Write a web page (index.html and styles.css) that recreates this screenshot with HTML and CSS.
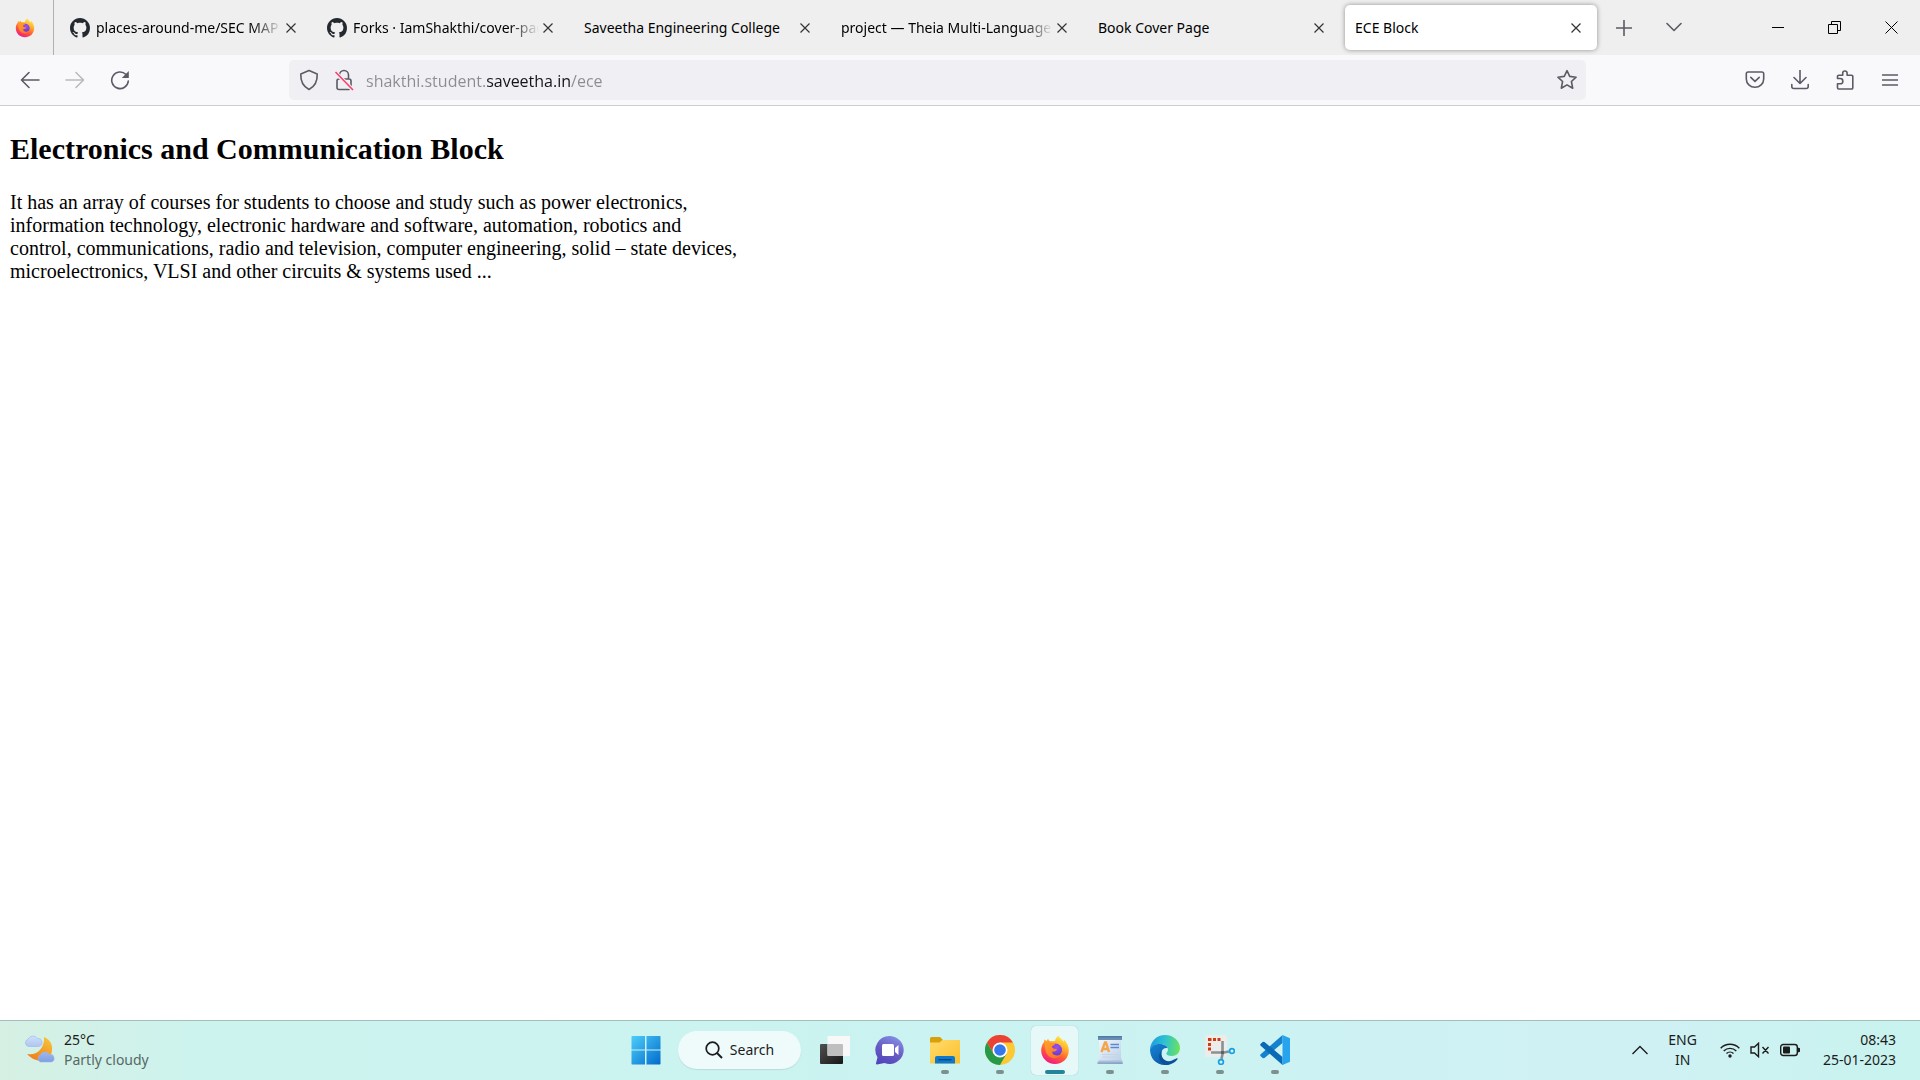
FILE: index.html
```html
<!DOCTYPE html>
<html lang="en">
<head>
<meta charset="utf-8">
<title>ECE Block</title>
<link rel="stylesheet" href="styles.css">
</head>
<body>
<svg class="defs" aria-hidden="true">
  <defs>
    <linearGradient id="fxBody" x1="0.8" y1="0" x2="0.3" y2="1"><stop offset="0" stop-color="#fff44f"/><stop offset="0.35" stop-color="#ffb02a"/><stop offset="0.65" stop-color="#ff5a36"/><stop offset="1" stop-color="#f0158a"/></linearGradient>
    <radialGradient id="fxGlobe" cx="0.6" cy="0.3" r="0.8"><stop offset="0" stop-color="#a04df0"/><stop offset="1" stop-color="#4a3bc8"/></radialGradient>
    <linearGradient id="fxFox" x1="0" y1="0" x2="1" y2="1"><stop offset="0" stop-color="#ffa62b"/><stop offset="1" stop-color="#ff6a2c"/></linearGradient>
    <linearGradient id="winBlue" gradientUnits="userSpaceOnUse" x1="0" y1="0" x2="30" y2="30"><stop offset="0" stop-color="#4fd0fb"/><stop offset="1" stop-color="#0069cb"/></linearGradient>
    <linearGradient id="chatG" x1="0.8" y1="0" x2="0.3" y2="1"><stop offset="0" stop-color="#8794e8"/><stop offset="0.5" stop-color="#6a5fc4"/><stop offset="1" stop-color="#5246bd"/></linearGradient>
    <linearGradient id="folderG" x1="0" y1="0" x2="1" y2="1"><stop offset="0" stop-color="#ffdc6b"/><stop offset="1" stop-color="#fcbf2d"/></linearGradient>
    <linearGradient id="edgeTop" x1="0" y1="0.4" x2="1" y2="0.5"><stop offset="0" stop-color="#1b9de0"/><stop offset="0.5" stop-color="#2fc3d0"/><stop offset="1" stop-color="#6be35a"/></linearGradient>
    <linearGradient id="edgeLow" x1="0" y1="0" x2="0.6" y2="1"><stop offset="0" stop-color="#1586d8"/><stop offset="1" stop-color="#0c59a4"/></linearGradient>
    <linearGradient id="moonG" x1="0.8" y1="0" x2="0.2" y2="1"><stop offset="0" stop-color="#f8c33a"/><stop offset="1" stop-color="#ee7c1a"/></linearGradient>
    <linearGradient id="cloudG" x1="0" y1="0" x2="0" y2="1"><stop offset="0" stop-color="#cfe0fb"/><stop offset="1" stop-color="#7f9ee2"/></linearGradient>
    <linearGradient id="darkG" x1="0" y1="0" x2="1" y2="1"><stop offset="0" stop-color="#505050"/><stop offset="1" stop-color="#171717"/></linearGradient>
    <linearGradient id="wpG" x1="0" y1="0" x2="1" y2="1"><stop offset="0" stop-color="#f4f9fd"/><stop offset="1" stop-color="#b4cce6"/></linearGradient>
    <symbol id="firefox" viewBox="0 0 30 30">
      <path fill="url(#fxBody)" d="M18.5 0.8c1.2 2 3.5 3.6 5 6 .4-.8.5-1.700.3-2.600 3.200 3 5 7 5 11.300C28.800 23.200 22.600 29 15 29S1.200 23 1.200 15.500c0-3.200 1-6.200 2.800-8.500l.5-2.500 2 1.500 1.500-2.300 1.500 2.500 5.500-.2c.3-2 1.500-4 3.500-5.200z"/>
      <circle cx="15.500" cy="15" r="6.500" fill="url(#fxGlobe)"/>
      <path fill="url(#fxFox)" d="M4.500 6l2.500 1.200L9 5.500c.5 1.500 1.500 2.300 3 2.500l3.500.3c-.3 1.500-2 2.300-3.500 3 .2 1.500.7 2 2 2.500l3 .2c-.6 2.300-2.500 3-4.500 2.500-1 2.500 3.500 5.500 8 3-1.500 4.500-9.500 5-12.800.5C4.500 16 5 10 4.500 6z"/>
    </symbol>
    <symbol id="github" viewBox="0 0 16 16"><path fill="#24292f" d="M8 0C3.58 0 0 3.58 0 8c0 3.540 2.290 6.530 5.470 7.590.4.070.55-.17.55-.38 0-.19-.01-.82-.01-1.490-2.010.37-2.530-.49-2.690-.94-.09-.23-.48-.94-.82-1.130-.28-.15-.68-.52-.01-.53.63-.01 1.080.58 1.230.82.72 1.210 1.870.87 2.330.66.070-.52.28-.87.51-1.070-1.780-.2-3.640-.89-3.640-3.950 0-.87.31-1.590.82-2.150-.08-.2-.36-1.020.08-2.120 0 0 .67-.21 2.200.82.64-.18 1.320-.27 2-.27s1.360.09 2 .27c1.530-1.040 2.200-.82 2.200-.82.44 1.100.16 1.920.08 2.120.51.56.82 1.270.82 2.150 0 3.070-1.870 3.750-3.650 3.950.29.25.54.73.54 1.480 0 1.070-.01 1.930-.01 2.200 0 .21.15.46.55.38A8.010 8.010 0 0 0 16 8c0-4.420-3.580-8-8-8z"/></symbol>
    <symbol id="x" viewBox="0 0 10 10"><path d="M.5.5l9 9M9.500.5l-9 9" fill="none" stroke="currentColor" stroke-width="1.200"/></symbol>
  </defs>
</svg>

<header class="browser">
  <div class="tabstrip">
    <button class="pinned" aria-label="Firefox View"><svg width="20" height="20"><use href="#firefox"/></svg></button>
    <div class="tabs" role="tablist">
      <div class="tab" role="tab"><svg class="favicon"><use href="#github"/></svg><span class="label fade">places-around-me/SEC MAP</span><button class="close" aria-label="Close tab"><svg><use href="#x"/></svg></button></div>
      <div class="tab" role="tab"><svg class="favicon"><use href="#github"/></svg><span class="label fade">Forks · IamShakthi/cover-page</span><button class="close" aria-label="Close tab"><svg><use href="#x"/></svg></button></div>
      <div class="tab" role="tab"><span class="label">Saveetha Engineering College</span><button class="close" aria-label="Close tab"><svg><use href="#x"/></svg></button></div>
      <div class="tab" role="tab"><span class="label fade">project — Theia Multi-Language</span><button class="close" aria-label="Close tab"><svg><use href="#x"/></svg></button></div>
      <div class="tab" role="tab"><span class="label">Book Cover Page</span><button class="close" aria-label="Close tab"><svg><use href="#x"/></svg></button></div>
      <div class="tab active" role="tab" aria-selected="true"><span class="label">ECE Block</span><button class="close" aria-label="Close tab"><svg><use href="#x"/></svg></button></div>
    </div>
    <div class="tab-tools">
      <button aria-label="New tab"><svg width="16" height="16" viewBox="0 0 16 16"><path class="line" d="M8 .5v15M.5 8h15"/></svg></button>
      <button aria-label="List all tabs"><svg width="16" height="16" viewBox="0 0 16 16"><path class="line" d="M1 3.500l7 7 7-7"/></svg></button>
    </div>
    <div class="window-controls">
      <button aria-label="Minimize"><svg width="12" height="12" viewBox="0 0 12 12"><path d="M0 5.500h12"/></svg></button>
      <button aria-label="Restore"><svg width="13" height="13" viewBox="0 0 13 13"><path d="M.5 3.500h9v9h-9zM3.500 3.500v-3h9v9h-3"/></svg></button>
      <button aria-label="Close"><svg width="13" height="13" viewBox="0 0 13 13"><path d="M.5.500l12 12M12.500.500l-12 12"/></svg></button>
    </div>
  </div>

  <div class="toolbar">
    <div class="nav">
      <button aria-label="Back"><svg width="20" height="20" viewBox="0 0 20 20"><path class="line" d="M2 10h17M9 2.500L1.500 10 9 17.500"/></svg></button>
      <button aria-label="Forward" disabled><svg width="20" height="20" viewBox="0 0 20 20"><path class="line" d="M18 10H1M11 2.500l7.500 7.500-7.500 7.500"/></svg></button>
      <button aria-label="Reload"><svg width="20" height="20" viewBox="0 0 20 20"><path class="line" d="M16 4.500A8.300 8.300 0 1 0 18.300 11"/><path fill="#5b5b66" d="M18.800 1v6.500a.5.500 0 0 1-.5.500h-6.500z"/></svg></button>
    </div>
    <div class="urlbar">
      <button aria-label="Tracking protection"><svg width="20" height="22" viewBox="0 0 20 22"><path class="line" d="M10 1.500L18.200 5c.3 6.500-1.500 12-8.200 15.500C3.300 17 1.500 11.500 1.800 5z"/></svg></button>
      <button aria-label="Connection not secure"><svg width="20" height="22" viewBox="0 0 20 22"><path class="line" d="M5.500 10V6a4.500 4.500 0 0 1 9 0v4M5 10h10a2 2 0 0 1 2 2v6.500a2 2 0 0 1-2 2H5a2 2 0 0 1-2-2V12a2 2 0 0 1 2-2z"/><path d="M2 4l17 17" stroke="#f0f0f4" stroke-width="4"/><path d="M1.500 3l17.500 18" stroke="#ff3b6b" stroke-width="1.600"/></svg></button>
      <input class="address" type="text" aria-label="Address" value="shakthi.student.saveetha.in/ece" spellcheck="false">
      <button aria-label="Bookmark this page"><svg width="22" height="22" viewBox="0 0 22 22"><path class="line" d="M11 1.700l2.700 5.700 6.400.8-4.700 4.300 1.300 6.700-5.700-3.300-5.700 3.300 1.300-6.700L1.900 8.200l6.400-.8z"/></svg></button>
    </div>
    <div class="actions">
      <button aria-label="Save to Pocket"><svg width="20" height="20" viewBox="0 0 20 20"><path class="line" d="M3 2h14a1.700 1.700 0 0 1 1.700 1.700V9a8.700 8.300 0 0 1-17.400 0V3.700A1.700 1.700 0 0 1 3 2zM5.800 7.300l4.200 4 4.200-4"/></svg></button>
      <button aria-label="Downloads"><svg width="20" height="20" viewBox="0 0 20 20"><path class="line" d="M10 0v13M4 7.500l6 6 6-6M1.800 14.500v2a2 2 0 0 0 2 2h12.400a2 2 0 0 0 2-2v-2"/></svg></button>
      <button aria-label="Extensions"><svg width="20" height="20" viewBox="0 0 20 20"><path class="line" d="M2.500 8.500V6.500a1.200 1.200 0 0 1 1.200-1.200h4V3.200a2.200 2.200 0 0 1 4.400 0v2.100h4.500a1.200 1.200 0 0 1 1.200 1.200v11.300a1.200 1.200 0 0 1-1.200 1.200H3.700a1.200 1.200 0 0 1-1.200-1.200v-4h2.700a2.600 2.600 0 0 0 0-5.300z"/></svg></button>
      <button aria-label="Menu"><svg width="16" height="16" viewBox="0 0 16 16"><path class="line" d="M.5 3h15M.5 8h15M.5 13h15"/></svg></button>
    </div>
  </div>
</header>

<main class="page">
  <h2>Electronics and Communication Block</h2>
  <p>It has an array of courses for students to choose and study such as power electronics,<br>information technology, electronic hardware and software, automation, robotics and<br>control, communications, radio and television, computer engineering, solid – state devices,<br>microelectronics, VLSI and other circuits &amp; systems used ...</p>
</main>

<footer class="taskbar">
  <button class="weather">
    <svg width="32" height="30" viewBox="0 0 32 30"><path fill="url(#moonG)" d="M20 2c7 2.500 9.500 9.500 7.500 16-2.500 8-14 12-24.500 1C13 21 21 13 20 2z"/><path fill="url(#cloudG)" stroke="#9db5ea" stroke-width=".6" d="M4.500 11.500a3.800 3.800 0 0 1-.5-7.300A5.500 5.500 0 0 1 13.500 3.500a4 4 0 0 1 1 8zM16.500 27a3.800 3.800 0 0 1-.3-7A5.300 5.300 0 0 1 25.500 19.500a3.800 3.800 0 0 1 1.500 7.500z"/></svg>
    <span class="stack"><span>25°C</span><span class="muted">Partly cloudy</span></span>
  </button>

  <nav class="apps" aria-label="Taskbar">
    <button class="app" aria-label="Start"><svg width="30" height="30" viewBox="0 0 30 30"><path fill="url(#winBlue)" d="M1 1h13v13.500H.5V1.500zM15.500 1H29l.5.5v13h-14zM.5 15.500H14V29.500H1l-.5-.5zM15.500 15.500h14V29l-.5.500H15.500z"/></svg></button>
    <button class="search"><svg width="18" height="18" viewBox="0 0 18 18"><circle cx="7.500" cy="7.500" r="6.300" fill="none" stroke="#1c1c1c" stroke-width="1.700"/><path d="M12 12l5 5" stroke="#1c1c1c" stroke-width="1.900"/></svg>Search</button>
    <button class="app" aria-label="Task view"><svg width="30" height="30" viewBox="0 0 30 30"><rect y="9" width="23" height="20" rx="1" fill="url(#darkG)"/><rect x="7.500" y="1" width="22.500" height="20" rx="1" fill="#f8f8f8"/><path fill="#bfbfbf" d="M7.500 9h14.500a1 1 0 0 1 1 1v11H8.500a1 1 0 0 1-1-1z"/></svg></button>
    <button class="app" aria-label="Chat"><svg width="30" height="30" viewBox="0 0 30 30"><path fill="url(#chatG)" d="M15 1a14 14 0 1 1-5.500 27L2 29.500c-.8 0-1.200-.5-1-1.200l1.500-6A14 14 0 0 1 15 1z"/><rect x="7" y="9" width="12" height="12" rx="1.500" fill="#fff"/><path fill="#fff" d="M20 13l3.500-3v10L20 17z"/></svg></button>
    <button class="app running" aria-label="File Explorer"><svg width="30" height="30" viewBox="0 0 30 30"><path fill="#d9a009" d="M0 3.500A1.500 1.500 0 0 1 1.500 2H10l3 3-3 4H0z"/><path fill="url(#folderG)" d="M0 7.500h9.500l3-2.500H30v23a.5.500 0 0 1-.5.500H.5A.5.500 0 0 1 0 28z"/><path fill="#0c79cc" d="M5 28.500V23a2 2 0 0 1 2-2h16a2 2 0 0 1 2 2v5.500z"/><path stroke="#07457c" stroke-width="1.300" d="M8.500 24.700h13"/></svg></button>
    <button class="app running" aria-label="Chrome"><svg width="30" height="30" viewBox="0 0 30 30"><circle cx="15" cy="15" r="15" fill="#fcc934"/><path fill="#ea4335" d="M2 7.500A15 15 0 0 1 28 7.500H15L8.500 18.800z"/><path fill="#269a48" d="M2 7.500A15 15 0 0 0 15 30l6.500-11.300L8.500 18.700z"/><circle cx="15" cy="15" r="7.500" fill="#fff"/><circle cx="15" cy="15" r="5.800" fill="#3478ee"/></svg></button>
    <button class="app running current" aria-label="Firefox"><svg width="30" height="30"><use href="#firefox"/></svg></button>
    <button class="app running" aria-label="WordPad"><svg width="30" height="30" viewBox="0 0 30 30"><path fill="url(#wpG)" d="M4 4h22v19l2 4v2H2v-2l2-4z"/><path fill="#6a8fb3" d="M3 1h24v4H3z"/><path fill="#4f7da6" d="M3 1h24v1.500H3z"/><path fill="#a9bfda" d="M4 25.500h22l1.500 2h-25z"/><path fill="#7590b3" d="M2.500 27.500h25v1.200h-25z"/><path fill="none" stroke="#f5a54a" stroke-width="2.400" d="M6.500 17l3.500-9.500h1l3 9.500M8 14h5"/><path stroke="#5c86d0" stroke-width="1.400" d="M15.500 9.500H24M15.500 12.500H24"/><path stroke="#c6d4e6" d="M7 19.500h17M7 22h17"/></svg></button>
    <button class="app running" aria-label="Edge"><svg width="30" height="30" viewBox="0 0 30 30"><path fill="url(#edgeTop)" d="M0 14.500C.5 6 7 0 15 0c9 0 15 6.500 15 13 0 5-3.800 8-8.300 8-3.200 0-5.300-1.300-5.300-2.500 0-1 1.600-1.500 1.600-4 0-3-3-5.500-7.500-5.500C5 9 1 11.500 0 14.500z"/><path fill="url(#edgeLow)" d="M0 14.500C1.500 10.500 5.500 9 9.500 9c4 0 7.500 1.800 8.300 4.300-4-1.500-6.300 2-6.300 5.200 0 5 4.500 10.500 8.500 10.500-1.500.700-3 1-5 1C6 30 0 23 0 14.500z"/><path fill="#0c4f9c" d="M11.800 15.800c-2.800 7 4 12.200 10.200 9.700 2-.7 3.500-1.800 4.800-2.200.7-.2 1 .4.700.9C25 28 20 30 15 30 9 27 7 20 11.800 15.800z"/></svg></button>
    <button class="app running" aria-label="Snipping Tool"><svg width="30" height="30" viewBox="0 0 30 30"><rect width="22" height="22" rx="2" fill="#ececea"/><path fill="#d13b12" d="M3 3h3.500v3H3zM8 3h3v3H8zM12.500 3h3v3h-3zM3 8h3v3H3zM3 12.500h3v3H3z"/><path fill="none" stroke="#8b9095" stroke-width="2.600" d="M17.500 6v13l-1 5M6 17.500h13l5-1"/><path fill="#5d6266" d="M16 16h3v3h-3z"/><circle cx="27" cy="16" r="2.400" fill="none" stroke="#1ba0e2" stroke-width="1.700"/><circle cx="16" cy="27" r="2.400" fill="none" stroke="#1ba0e2" stroke-width="1.700"/></svg></button>
    <button class="app running" aria-label="Visual Studio Code"><svg width="30" height="30" viewBox="0 0 30 30"><path fill="#1482cc" d="M22.500 0v8L4.500 23 3 23.200.7 21.300c-.7-.7-.7-1.400 0-2z"/><path fill="#0b6ab5" d="M22.500 30v-8L4.500 7 3 6.800.7 8.700c-.7.700-.7 1.400 0 2z"/><path fill="#26a4ee" d="M22.500 0L30 3.200v23.600L22.500 30c-1 0-.5-.8 0-1.500z"/></svg></button>
  </nav>

  <div class="tray">
    <button aria-label="Show hidden icons"><svg width="16" height="10" viewBox="0 0 16 10"><path d="M.5 9L8 1.500 15.500 9" class="ink"/></svg></button>
    <button class="lang"><span>ENG</span><span>IN</span></button>
    <button class="status" aria-label="Network, volume and battery">
      <svg width="20" height="16" viewBox="0 0 20 16"><path class="ink" d="M.7 6.200a13 13 0 0 1 18.600 0M3.700 8.900a9 9 0 0 1 12.600 0M6.500 11.600a5 5 0 0 1 7 0"/><circle cx="10" cy="14" r="1.700" fill="#1c1c1c"/></svg>
      <svg width="20" height="16" viewBox="0 0 20 16"><path class="ink" d="M1 5h3.500l4-3.700v13.400l-4-3.700H1zM12.500 5l6 6.500M18.500 5l-6 6.500"/></svg>
      <svg width="21" height="14" viewBox="0 0 21 14"><rect class="ink" x=".7" y="1.500" width="16.600" height="11" rx="2.500"/><rect x="3" y="3.500" width="7" height="7" rx="1" fill="#1c1c1c"/><path fill="#1c1c1c" d="M18 4.500l2 .7v3.600l-2 .7z"/></svg>
    </button>
    <button class="clock"><span>08:43</span><span>25-01-2023</span></button>
  </div>
</footer>
</body>
</html>
```

FILE: styles.css
```css
* { box-sizing: border-box; }

body {
  margin: 0;
  min-height: 100vh;
  display: flex;
  flex-direction: column;
  background: #fff;
  color: #000;
  font-family: "Noto Sans", "Open Sans", sans-serif;
  font-size: 14px;
}

.defs { position: absolute; width: 0; height: 0; }

button {
  display: flex;
  align-items: center;
  justify-content: center;
  padding: 0;
  border: 0;
  background: none;
  color: inherit;
  font: inherit;
}

svg { display: block; flex: none; }

.line {
  fill: none;
  stroke: #5b5b66;
  stroke-width: 1.6;
  stroke-linecap: round;
  stroke-linejoin: round;
}

.ink { fill: none; stroke: #1c1c1c; stroke-width: 1.4; }

/* Tab strip */
.tabstrip { display: flex; height: 55px; background: #efefef; }

.pinned {
  width: 54px;
  padding-right: 4px;
  border-right: 1px solid #b0b0b0;
}

.tabs {
  flex: 0 1 1537px;
  min-width: 0;
  display: flex;
  gap: 5px;
  margin-left: 6px;
  padding: 5px 0;
}

.tab {
  flex: 1 1 0;
  min-width: 0;
  display: flex;
  align-items: center;
  padding: 0 12px 0 10px;
  border-radius: 5px;
}

.tab.active { background: #fff; box-shadow: 0 0 5px rgba(0, 0, 0, 0.4); }

.favicon { width: 20px; height: 20px; margin-right: 6px; }

.label {
  flex: 1;
  min-width: 0;
  overflow: hidden;
  white-space: nowrap;
  line-height: 20px;
}

.label.fade {
  -webkit-mask-image: linear-gradient(to left, transparent, #000 30px);
  mask-image: linear-gradient(to left, transparent, #000 30px);
}

.close { width: 18px; height: 24px; color: #333; }
.close svg { width: 10px; height: 10px; }

.tab-tools { display: flex; gap: 9px; margin-left: 6px; }
.tab-tools button { width: 41px; }

.window-controls { display: flex; margin-left: auto; }
.window-controls button { width: 57px; }
.window-controls path { fill: none; stroke: #000; }

/* Navigation toolbar */
.toolbar {
  display: flex;
  align-items: center;
  height: 51px;
  padding: 0 8px 0 7px;
  border-bottom: 1px solid #ccccd1;
  background: #f9f9fb;
}

.nav, .actions { display: flex; }
.nav button, .actions button { width: 45px; height: 40px; }
.nav button:disabled { opacity: 0.4; }

.urlbar {
  flex: 1;
  min-width: 0;
  display: flex;
  align-items: center;
  height: 40px;
  margin: 0 146px 0 147px;
  padding: 0 2px;
  border-radius: 5px;
  background: #f0f0f4;
}

.urlbar button { width: 35px; height: 36px; }

.address {
  flex: 1;
  min-width: 0;
  height: 36px;
  margin-left: 5px;
  padding: 2px 0 0;
  border: 0;
  outline: 0;
  font-family: "Open Sans", "Noto Sans", sans-serif;
  font-size: 16px;
  color: transparent;
  background: linear-gradient(to right, #8b8b92 120px, #15141a 120px 204px, #8b8b92 204px);
  -webkit-background-clip: text;
  background-clip: text;
}

/* Page content */
.page {
  flex: 1;
  padding: 25px 10px;
  font-family: "Liberation Serif", "Times New Roman", serif;
  font-size: 20px;
  line-height: 23px;
}

.page h2 { margin: 0 0 25px; font-size: 30px; line-height: 35px; }
.page p { margin: 0; }

/* Taskbar */
.taskbar {
  display: grid;
  grid-template-columns: 1fr auto 1fr;
  height: 60px;
  border-top: 1px solid #a5bdbb;
  background: linear-gradient(to right, #d6f0e3, #cdf3ee 10%, #caf3f1 50%, #d0f1f4 85%, #c8f3ee);
  color: #1c1c1c;
}

.weather {
  justify-self: start;
  gap: 8px;
  padding: 0 0 2px 24px;
  text-align: left;
}

.stack, .lang, .clock { display: flex; flex-direction: column; line-height: 20px; }
.muted { color: #566965; }

.apps {
  isolation: isolate;
  display: flex;
  align-items: center;
  padding-bottom: 2px;
}

.app {
  position: relative;
  width: 55px;
  height: 57px;
}

.running::after {
  content: "";
  position: absolute;
  bottom: 4px;
  left: 24px;
  width: 8px;
  height: 4px;
  border-radius: 2px;
  background: #7c908e;
}

.current::before {
  content: "";
  position: absolute;
  inset: 5px 4px 3px;
  z-index: -1;
  border-radius: 5px;
  background: #e6f8f8;
  box-shadow: 0 0 1px #8fb5b5;
}

.current::after { left: 18px; width: 20px; background: #23849a; }

.search {
  gap: 7px;
  width: 123px;
  height: 38px;
  margin: 0 6px 0 5px;
  border-radius: 19px;
  background: #effbfb;
  box-shadow: 0 1px 1px #b9dcdc;
}

.tray {
  justify-self: end;
  display: flex;
  align-items: stretch;
  padding: 0 24px 2px 0;
}

.tray .lang { align-items: center; margin: 0 23px 0 20px; }
.tray .status { gap: 10px; margin-right: 22px; }
.tray .clock { align-items: flex-end; }
```
